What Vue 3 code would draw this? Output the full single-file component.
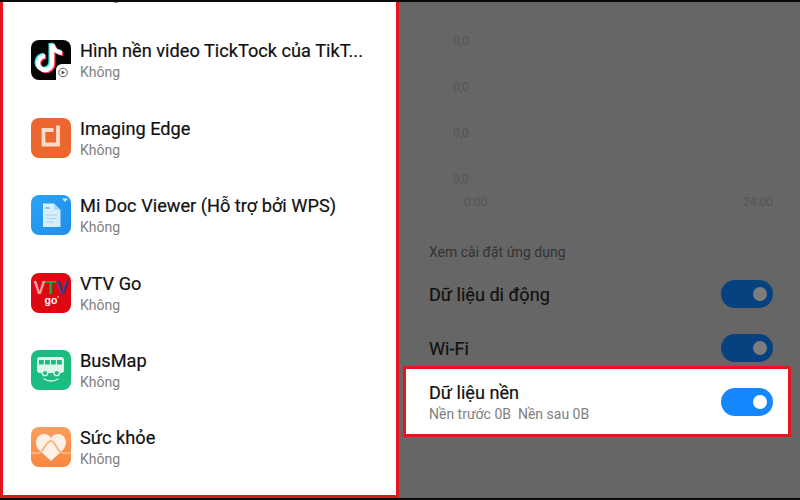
<script setup>
const apps = [
  { id: 'hidden', name: '', icon: '' },
  { id: 'tiktok', name: 'Hình nền video TickTock của TikT...', icon: 'tiktok' },
  { id: 'imaging', name: 'Imaging Edge', icon: 'imaging' },
  { id: 'midoc', name: 'Mi Doc Viewer (Hỗ trợ bởi WPS)', icon: 'midoc' },
  { id: 'vtv', name: 'VTV Go', icon: 'vtv' },
  { id: 'busmap', name: 'BusMap', icon: 'busmap' },
  { id: 'health', name: 'Sức khỏe', icon: 'health' },
];

const chartRows = [1, 2, 3, 4];
</script>

<template>
  <div class="screen">
    <section class="left-panel">
      <div v-for="app in apps" :key="app.id" class="app-row">
        <div class="app-icon">
          <svg v-if="app.icon === 'tiktok'" viewBox="0 0 40 40" width="40" height="40">
            <rect width="40" height="40" rx="8" fill="#050505" />
            <g fill="none" stroke-width="4.500">
              <path d="M21 4v19a7 7 0 1 1-7-7M21 4c1 5 5 8.500 10 9" stroke="#25f4ee" transform="translate(-1.300 -1)" />
              <path d="M21 4v19a7 7 0 1 1-7-7M21 4c1 5 5 8.500 10 9" stroke="#fe2c55" transform="translate(1.300 1)" />
              <path d="M21 4v19a7 7 0 1 1-7-7M21 4c1 5 5 8.500 10 9" stroke="#fff" />
            </g>
            <path d="M25 40V30a6 6 0 0 1 6-6h9v16z" fill="#fff" />
            <circle cx="32" cy="32.500" r="4.300" fill="#fff" stroke="#555" stroke-width="1" />
            <path d="M30.700 30.500l3.300 2-3.300 2z" fill="#444" />
          </svg>

          <svg v-else-if="app.icon === 'imaging'" viewBox="0 0 40 40" width="40" height="40">
            <rect width="40" height="40" rx="8" fill="#ec662f" />
            <path d="M22.500 12H12.500v14.500H27V7.500" fill="none" stroke="#fbdcc9" stroke-width="3.800" />
          </svg>

          <svg v-else-if="app.icon === 'midoc'" viewBox="0 0 40 40" width="40" height="40">
            <defs>
              <linearGradient id="docBg" x1="0" y1="0" x2="1" y2="1">
                <stop offset="0" stop-color="#2aa3f5" />
                <stop offset="1" stop-color="#1f8dec" />
              </linearGradient>
            </defs>
            <rect width="40" height="40" rx="8" fill="url(#docBg)" />
            <path d="M12 8.500h11l6.500 6.500v17H12z" fill="#d7eefc" />
            <path d="M23 8.500V15h6.500z" fill="#a9d8f8" />
            <path d="M15 20h11M15 23.500h11M15 27h8" stroke="#a5d3f3" stroke-width="1" />
            <rect x="14.500" y="12" width="4" height="2" fill="#7fbdea" />
            <path d="M31 3.500h6l-3 3.500z" fill="#cfeafc" />
          </svg>

          <svg v-else-if="app.icon === 'vtv'" viewBox="0 0 40 40" width="40" height="40">
            <rect width="40" height="40" rx="8" fill="#de0812" />
            <text x="2.500" y="20.500" class="vtv-letter" textLength="35" lengthAdjust="spacingAndGlyphs"><tspan fill="#f4a0a0">V</tspan><tspan fill="#2f9a3c">T</tspan><tspan fill="#2d3f8f">V</tspan></text>
            <text x="13.500" y="31" class="vtv-go">go</text>
            <circle cx="27" cy="24" r="0.800" fill="#fff" />
          </svg>

          <svg v-else-if="app.icon === 'busmap'" viewBox="0 0 40 40" width="40" height="40">
            <rect width="40" height="40" rx="8" fill="#1cbb80" />
            <rect x="6" y="7" width="27" height="16" rx="3" fill="#ddf5ea" />
            <path d="M8 10h4.800v4.500H8zM14 10h4.800v4.500H14zM20 10h4.800v4.500H20zM26 10h4.800v4.500H26z" fill="#1cbb80" />
            <circle cx="14" cy="23" r="2.700" fill="#1cbb80" stroke="#ddf5ea" stroke-width="1.300" />
            <circle cx="25.700" cy="23" r="2.700" fill="#1cbb80" stroke="#ddf5ea" stroke-width="1.300" />
            <path d="M13 29c4 2.700 10 2.700 14 0" fill="none" stroke="#ddf5ea" stroke-width="1.400" stroke-linecap="round" />
          </svg>

          <svg v-else-if="app.icon === 'health'" viewBox="0 0 40 40" width="40" height="40">
            <defs>
              <linearGradient id="healthBg" x1="0" y1="0" x2="0" y2="1">
                <stop offset="0" stop-color="#fb9f5e" />
                <stop offset="1" stop-color="#f8873c" />
              </linearGradient>
            </defs>
            <rect width="40" height="40" rx="8" fill="url(#healthBg)" />
            <path d="M20 34L8 23C2 16 6 7 13 7c3 0 5.500 1.500 7 4 1.500-2.500 4-4 7-4 7 0 11 9 5 16z" fill="#fdf0e6" />
            <path d="M0 26c4 0 8 1 10-1 3-3 6-11 10-11s6 9 10 11.500c2 1.500 6 .5 10 .5" fill="none" stroke="#fbb684" stroke-width="2" />
          </svg>
        </div>
        <div class="app-text">
          <div class="app-name">{{ app.name }}</div>
          <div class="app-sub">Không</div>
        </div>
      </div>
    </section>

    <section class="right-panel">
      <div class="chart">
        <div v-for="row in chartRows" :key="row" class="chart-row">
          <span>0,0</span>
          <i class="chart-line"></i>
        </div>
        <div class="chart-axis">
          <span>0:00</span>
          <span>24:00</span>
        </div>
      </div>

      <div class="section-title">Xem cài đặt ứng dụng</div>

      <div class="setting dim">
        <span class="setting-name">Dữ liệu di động</span>
        <span class="switch"><b></b></span>
      </div>
      <div class="setting dim">
        <span class="setting-name">Wi-Fi</span>
        <span class="switch"><b></b></span>
      </div>

      <div class="highlight">
        <div class="highlight-text">
          <div class="setting-name">Dữ liệu nền</div>
          <div class="setting-sub">Nền trước 0B&nbsp;&nbsp;Nền sau 0B</div>
        </div>
        <span class="switch"><b></b></span>
      </div>
    </section>
  </div>
</template>

<style>
html, body {
  margin: 0;
  background: #000;
}
</style>

<style scoped>
.screen {
  width: 800px;
  height: 500px;
  box-sizing: border-box;
  padding: 2px 0;
  display: flex;
  background: #0a0a0a;
  font-family: Roboto, "Noto Sans", sans-serif;
  overflow: hidden;
}

.left-panel {
  width: 399px;
  flex: none;
  box-sizing: border-box;
  border: 3px solid #e2161c;
  border-top: none;
  background: #fff;
  display: flex;
  flex-direction: column;
  justify-content: flex-end;
  overflow: hidden;
  padding-left: 28px;
  padding-bottom: 9px;
}

.app-row {
  height: 77.4px;
  flex: none;
  display: flex;
  gap: 9px;
  align-items: center;
}

.app-icon {
  width: 40px;
  height: 40px;
  flex: none;
}

.app-icon svg {
  display: block;
}

.app-text {
  margin-top: 5px;
}

.app-name {
  font-size: 18.2px;
  line-height: 22px;
  color: #111;
  margin-top: -3px;
  min-height: 22px;
  white-space: nowrap;
  -webkit-text-stroke: 0.2px #111;
}

.app-sub {
  font-size: 14px;
  line-height: 20px;
  color: #808080;
}

.vtv-letter {
  font-family: "Liberation Sans", sans-serif;
  font-weight: bold;
  font-size: 18px;
}

.vtv-go {
  font-family: "Liberation Sans", sans-serif;
  font-weight: bold;
  font-size: 10.5px;
  fill: #fff;
}

.right-panel {
  flex: 1;
  background: #666;
  padding: 30px 27px 0 30px;
  display: flex;
  flex-direction: column;
}

.chart {
  padding-left: 24px;
  color: #555;
  font-size: 12px;
}

.chart-row {
  height: 46px;
  display: flex;
  align-items: flex-start;
  gap: 20px;
  line-height: 18px;
}

.chart-line {
  flex: 1;
  height: 0;
  margin-top: 10px;
  border-top: 1px dashed #626262;
}

.chart-axis {
  display: flex;
  justify-content: space-between;
  padding-left: 11px;
  margin-top: -23px;
  line-height: 18px;
}

.section-title {
  margin-top: 31px;
  font-size: 14px;
  line-height: 20px;
  color: #333;
}

.setting {
  display: flex;
  justify-content: space-between;
  align-items: center;
}

.dim {
  height: 28px;
  margin-top: 26px;
  color: #111;
}

.dim .setting-name {
  padding-top: 2px;
}

.section-title + .dim {
  margin-top: 18px;
}

.setting-name {
  font-size: 18.1px;
  line-height: 22px;
  -webkit-text-stroke: 0.2px currentColor;
}

.setting-sub {
  font-size: 14px;
  line-height: 20px;
  color: #808080;
}

.switch {
  width: 52px;
  height: 28px;
  border-radius: 14px;
  background: #05427f;
  display: flex;
  align-items: center;
  justify-content: flex-end;
  padding-right: 6px;
  box-sizing: border-box;
}

.switch b {
  width: 14px;
  height: 14px;
  border-radius: 50%;
  background: #7c7c7c;
}

.highlight {
  margin: 4px -18px 0 -26px;
  height: 71px;
  box-sizing: border-box;
  border: 3px solid #e2161c;
  background: #fff;
  padding: 0 15px 0 23px;
  display: flex;
  justify-content: space-between;
  align-items: center;
  color: #111;
}

.highlight-text {
  padding-top: 3px;
}

.highlight .switch {
  background: #1387fb;
}

.highlight .switch b {
  background: #fff;
}
</style>
